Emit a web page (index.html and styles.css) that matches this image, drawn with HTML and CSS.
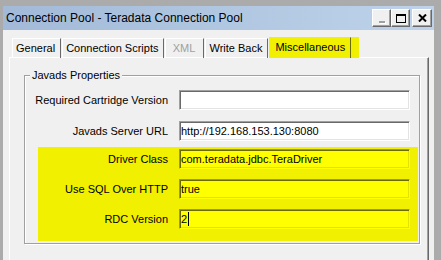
FILE: index.html
```html
<!DOCTYPE html>
<html lang="en">
<head>
    <meta charset="UTF-8">
    <title>Connection Pool - Teradata Connection Pool</title>
    <link rel="stylesheet" href="styles.css">
</head>
<body>
<div class="window">
    <div class="titlebar">
        <div class="title">Connection Pool - Teradata Connection Pool</div>
        <a class="btn btn-min"><i></i></a>
        <a class="btn btn-max"><i></i></a>
        <a class="btn btn-close">
            <svg width="9" height="8" viewBox="0 0 9 8"><path d="M1 0.5L8 7.5M8 0.5L1 7.5" stroke="#000" stroke-width="2"/></svg>
        </a>
    </div>
    <div class="tabs">
        <span class="tab">General</span>
        <span class="tab">Connection Scripts</span>
        <span class="tab tab-off">XML</span>
        <span class="tab">Write Back</span>
        <span class="mark"><span class="tab active">Miscellaneous</span></span>
    </div>
    <div class="panel">
        <div class="group">
            <div class="group-title">Javads Properties</div>
            <div class="row first">
                <label>Required Cartridge Version</label>
                <div class="field"></div>
            </div>
            <div class="row">
                <label>Javads Server URL</label>
                <div class="field">http://192.168.153.130:8080</div>
            </div>
            <div class="hilite">
                <div class="row">
                    <label>Driver Class</label>
                    <div class="field">com.teradata.jdbc.TeraDriver</div>
                </div>
                <div class="row">
                    <label>Use SQL Over HTTP</label>
                    <div class="field">true</div>
                </div>
                <div class="row">
                    <label>RDC Version</label>
                    <div class="field">2<span class="caret"></span></div>
                </div>
            </div>
        </div>
    </div>
</div>
</body>
</html>
```

FILE: styles.css
```css
html, body {
    margin: 0;
    height: 100%;
    overflow: hidden;
}

body {
    background: #ababab;
    font: 11px/14px "Liberation Sans", Arial, sans-serif;
    color: #000;
}

.window {
    margin: 6px 7px 0 3px;
    height: 254px;
    background: #f0f0f0;
    overflow: hidden;
}

/* title bar */
.titlebar {
    display: flex;
    align-items: center;
    height: 24px;
    padding: 0 2px 0 3px;
    background: linear-gradient(to right, #a2bad8, #bed3ea);
}

.title {
    flex: 1;
    font-size: 12px;
}

.btn {
    display: flex;
    align-items: center;
    justify-content: center;
    box-sizing: border-box;
    width: 19px;
    height: 18px;
    background: #f0f0f0;
    border: 1px solid;
    border-color: #fff #696969 #696969 #fff;
    box-shadow: inset -1px -1px #a0a0a0;
}

.btn-min i {
    width: 6px;
    height: 2px;
    margin-top: 8px;
    background: #a0a0a0;
    box-shadow: 1px 1px #fff;
}

.btn-max i {
    box-sizing: border-box;
    width: 10px;
    height: 9px;
    border: 1px solid #000;
    border-top-width: 2px;
}

.btn-close {
    width: 20px;
    margin-left: 2px;
}

/* tabs */
.tabs {
    display: flex;
    align-items: flex-end;
    margin: 7px 0 -1px 9px;
}

.tab {
    box-sizing: border-box;
    height: 20px;
    line-height: 19px;
    padding: 0 5px 0 3px;
    border-left: 1px solid #fff;
    border-top: 1px solid #fff;
    border-right: 1px solid #696969;
    white-space: nowrap;
}

.tab + .tab {
    margin-left: 1px;
}

.tab-off {
    min-width: 39px;
    text-align: center;
    color: #a0a0a0;
}

.mark {
    display: flex;
    z-index: 1;
    margin-left: 1px;
    padding-right: 8px;
    background: #f0f000;
}

.tab.active {
    height: 21px;
    padding: 0 5px 1px 5px;
    border-left-color: #f0f000;
    border-top-color: #f0f000;
    border-right-color: #696900;
}

/* tab page */
.panel {
    margin: 0 5px 0 6px;
    height: 240px;
    border-top: 1px solid #fff;
    border-left: 1px solid #fff;
    border-right: 1px solid #696969;
    box-shadow: inset -1px 0 #a0a0a0;
    overflow: hidden;
}

.group {
    margin: 17px 8px 0 14px;
    padding-bottom: 2px;
    border: 1px solid #a0a0a0;
    box-shadow: inset 1px 1px #fff, 1px 1px #fff;
}

.group-title {
    width: fit-content;
    margin: -8px 0 0 5px;
    padding: 0 2px;
    background: #f0f0f0;
}

.row {
    display: flex;
    align-items: center;
    gap: 11px;
    height: 20px;
    margin-top: 11px;
    padding-right: 9px;
}

.row.first {
    margin-top: 8px;
}

.row label {
    flex: 1;
    text-align: right;
    white-space: nowrap;
}

.field {
    box-sizing: border-box;
    width: 231px;
    height: 20px;
    padding-left: 1px;
    line-height: 18px;
    background: #fff;
    border: 1px solid;
    border-color: #a0a0a0 #fff #fff #a0a0a0;
    box-shadow: inset 1px 1px #696969, inset -1px -1px #e3e3e3;
}

/* yellow marker over the last rows */
.hilite {
    margin: 6px 1px 0 13px;
    padding: 2px 0 12px;
    background: #f0f000;
}

.hilite .row {
    margin-top: 10px;
    padding-right: 8px;
}

.hilite .row:first-child {
    margin-top: 0;
}

.hilite .field {
    background: #ffff00;
    border-color: #a0a000 #ffff00 #ffff00 #a0a000;
    box-shadow: inset 1px 1px #696900, inset -1px -1px #e3e300;
}

.caret {
    display: inline-block;
    width: 1px;
    height: 14px;
    margin-left: 1px;
    vertical-align: -3px;
    background: #000;
}
```
